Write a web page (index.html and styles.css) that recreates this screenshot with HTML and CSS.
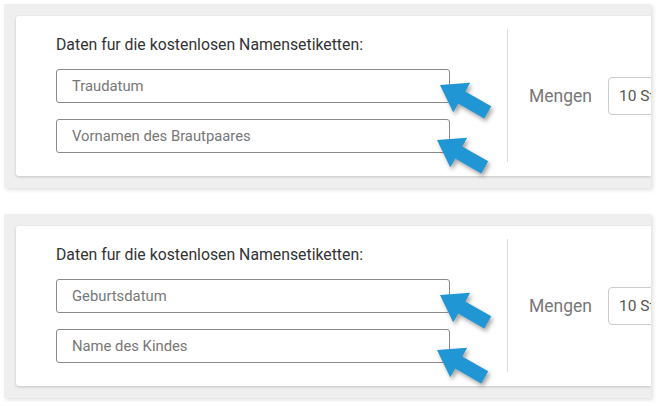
FILE: index.html
```html
<!DOCTYPE html>
<html lang="de">
<head>
  <meta charset="UTF-8" />
  <meta name="viewport" content="width=device-width, initial-scale=1.0"/>
  <title>Namensetiketten</title>
  <link rel="stylesheet" href="styles.css">
</head>
<body>
  <div class="panel">
    <div class="card">
      <div class="fields">
        <label class="fields-title">Daten fur die kostenlosen Namensetiketten:</label>
        <input type="text" class="field" placeholder="Traudatum">
        <input type="text" class="field" placeholder="Vornamen des Brautpaares">
      </div>
      <div class="divider"></div>
      <div class="amount">
        <span class="amount-label">Mengen</span>
        <div class="amount-select">10 Stück</div>
      </div>
    </div>
    <svg class="arrows" width="647" height="184" viewBox="0 0 647 184">
      <polygon points="436,81 466.2,78.8 461.2,87.4 487.2,102.3 480.2,114.5 454.2,99.6 449.2,108.2" />
      <polygon points="433,136 463.2,133.8 458.2,142.4 484.2,157.3 477.2,169.5 451.2,154.6 446.2,163.2" />
    </svg>
  </div>

  <div class="panel">
    <div class="card">
      <div class="fields">
        <label class="fields-title">Daten fur die kostenlosen Namensetiketten:</label>
        <input type="text" class="field" placeholder="Geburtsdatum">
        <input type="text" class="field" placeholder="Name des Kindes">
      </div>
      <div class="divider"></div>
      <div class="amount">
        <span class="amount-label">Mengen</span>
        <div class="amount-select">10 Stück</div>
      </div>
    </div>
    <svg class="arrows" width="647" height="184" viewBox="0 0 647 184">
      <polygon points="436,81 466.2,78.8 461.2,87.4 487.2,102.3 480.2,114.5 454.2,99.6 449.2,108.2" />
      <polygon points="433,136 463.2,133.8 458.2,142.4 484.2,157.3 477.2,169.5 451.2,154.6 446.2,163.2" />
    </svg>
  </div>
</body>
</html>
```

FILE: styles.css
```css
body {
  margin: 0;
  padding: 4px;
  font-family: Roboto, 'Liberation Sans', sans-serif;
  background-color: #ffffff;
  color: #333;
}

.panel {
  position: relative;
  width: 647px;
  height: 184px;
  box-sizing: border-box;
  padding: 12px 0 12px 12px;
  background-color: #efefef;
  box-shadow: 2px 2px 4px rgba(0,0,0,0.12);
  overflow: hidden;
}

.panel + .panel {
  margin-top: 26px;
}

.card {
  display: flex;
  height: 160px;
  background-color: #fff;
  border-radius: 3px 0 0 3px;
  box-shadow: 0 1px 3px rgba(0,0,0,0.18);
  overflow: hidden;
}

.fields {
  display: flex;
  flex-direction: column;
  width: 394px;
  flex-shrink: 0;
  padding: 19px 0 0 40px;
  margin-right: 57px;
}

.fields-title {
  font-size: 15.8px;
  line-height: 20px;
  color: #333;
  margin-bottom: 14px;
  white-space: nowrap;
}

.field {
  height: 34px;
  box-sizing: border-box;
  margin: 0 0 16px;
  padding: 0 15px;
  border: 1px solid #8a8a8a;
  border-radius: 3px;
  font-family: inherit;
  font-size: 14.8px;
  color: #333;
  background: #fff;
}

.field::placeholder {
  color: #777;
}

.divider {
  width: 1px;
  flex-shrink: 0;
  margin: 13px 0 14px;
  background-color: #dcdcdc;
}

.amount {
  display: flex;
  align-items: center;
  gap: 16px;
  padding-left: 21px;
  white-space: nowrap;
}

.amount-label {
  font-size: 17.5px;
  color: #777;
}

.amount-select {
  height: 38px;
  box-sizing: border-box;
  padding: 0 20px 0 10px;
  border: 1px solid #ccc;
  border-radius: 4px;
  font-size: 15.5px;
  line-height: 36px;
  color: #555;
}

.arrows {
  position: absolute;
  left: 0;
  top: 0;
  fill: #2196d4;
  filter: drop-shadow(2px 3px 2px rgba(0,0,0,0.35));
}
```
